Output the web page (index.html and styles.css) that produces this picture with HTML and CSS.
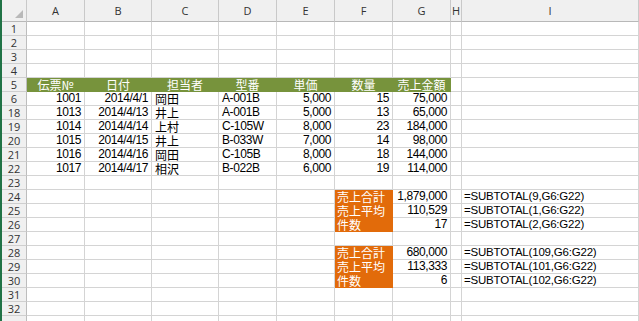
FILE: index.html
```html
<!DOCTYPE html>
<html lang="ja">
<head>
<meta charset="utf-8">
<link rel="stylesheet" href="styles.css">
</head>
<body>
<div class="sheet">
  <div class="row hdr">
    <div class="c corner"><span class="tri"></span></div>
    <div class="c ch">A</div><div class="c ch">B</div><div class="c ch">C</div><div class="c ch">D</div><div class="c ch">E</div><div class="c ch">F</div><div class="c ch">G</div><div class="c ch">H</div><div class="c ch">I</div>
  </div>
  <div class="row"><div class="c rh">1</div><div class="c"></div><div class="c"></div><div class="c"></div><div class="c"></div><div class="c"></div><div class="c"></div><div class="c"></div><div class="c"></div><div class="c"></div></div>
  <div class="row"><div class="c rh">2</div><div class="c"></div><div class="c"></div><div class="c"></div><div class="c"></div><div class="c"></div><div class="c"></div><div class="c"></div><div class="c"></div><div class="c"></div></div>
  <div class="row"><div class="c rh">3</div><div class="c"></div><div class="c"></div><div class="c"></div><div class="c"></div><div class="c"></div><div class="c"></div><div class="c"></div><div class="c"></div><div class="c"></div></div>
  <div class="row"><div class="c rh">4</div><div class="c"></div><div class="c"></div><div class="c"></div><div class="c"></div><div class="c"></div><div class="c"></div><div class="c"></div><div class="c"></div><div class="c"></div></div>
  <div class="row"><div class="c rh">5</div><div class="c g">伝票№</div><div class="c g">日付</div><div class="c g">担当者</div><div class="c g">型番</div><div class="c g">単価</div><div class="c g">数量</div><div class="c g">売上金額</div><div class="c"></div><div class="c"></div></div>
  <div class="row"><div class="c rh">6</div><div class="c r">1001</div><div class="c r">2014/4/1</div><div class="c l jp">岡田</div><div class="c l">A-001B</div><div class="c r">5,000</div><div class="c r">15</div><div class="c r">75,000</div><div class="c"></div><div class="c"></div></div>
  <div class="row"><div class="c rh">18</div><div class="c r">1013</div><div class="c r">2014/4/13</div><div class="c l jp">井上</div><div class="c l">A-001B</div><div class="c r">5,000</div><div class="c r">13</div><div class="c r">65,000</div><div class="c"></div><div class="c"></div></div>
  <div class="row"><div class="c rh">19</div><div class="c r">1014</div><div class="c r">2014/4/14</div><div class="c l jp">上村</div><div class="c l">C-105W</div><div class="c r">8,000</div><div class="c r">23</div><div class="c r">184,000</div><div class="c"></div><div class="c"></div></div>
  <div class="row"><div class="c rh">20</div><div class="c r">1015</div><div class="c r">2014/4/15</div><div class="c l jp">井上</div><div class="c l">B-033W</div><div class="c r">7,000</div><div class="c r">14</div><div class="c r">98,000</div><div class="c"></div><div class="c"></div></div>
  <div class="row"><div class="c rh">21</div><div class="c r">1016</div><div class="c r">2014/4/16</div><div class="c l jp">岡田</div><div class="c l">C-105B</div><div class="c r">8,000</div><div class="c r">18</div><div class="c r">144,000</div><div class="c"></div><div class="c"></div></div>
  <div class="row"><div class="c rh">22</div><div class="c r">1017</div><div class="c r">2014/4/17</div><div class="c l jp">相沢</div><div class="c l">B-022B</div><div class="c r">6,000</div><div class="c r">19</div><div class="c r">114,000</div><div class="c"></div><div class="c"></div></div>
  <div class="row"><div class="c rh">23</div><div class="c"></div><div class="c"></div><div class="c"></div><div class="c"></div><div class="c"></div><div class="c"></div><div class="c"></div><div class="c"></div><div class="c"></div></div>
  <div class="row"><div class="c rh">24</div><div class="c"></div><div class="c"></div><div class="c"></div><div class="c"></div><div class="c"></div><div class="c o">売上合計</div><div class="c r">1,879,000</div><div class="c"></div><div class="c f">=SUBTOTAL(9,G6:G22)</div></div>
  <div class="row"><div class="c rh">25</div><div class="c"></div><div class="c"></div><div class="c"></div><div class="c"></div><div class="c"></div><div class="c o">売上平均</div><div class="c r">110,529</div><div class="c"></div><div class="c f">=SUBTOTAL(1,G6:G22)</div></div>
  <div class="row"><div class="c rh">26</div><div class="c"></div><div class="c"></div><div class="c"></div><div class="c"></div><div class="c"></div><div class="c o">件数</div><div class="c r">17</div><div class="c"></div><div class="c f">=SUBTOTAL(2,G6:G22)</div></div>
  <div class="row"><div class="c rh">27</div><div class="c"></div><div class="c"></div><div class="c"></div><div class="c"></div><div class="c"></div><div class="c"></div><div class="c"></div><div class="c"></div><div class="c"></div></div>
  <div class="row"><div class="c rh">28</div><div class="c"></div><div class="c"></div><div class="c"></div><div class="c"></div><div class="c"></div><div class="c o">売上合計</div><div class="c r">680,000</div><div class="c"></div><div class="c f">=SUBTOTAL(109,G6:G22)</div></div>
  <div class="row"><div class="c rh">29</div><div class="c"></div><div class="c"></div><div class="c"></div><div class="c"></div><div class="c"></div><div class="c o">売上平均</div><div class="c r">113,333</div><div class="c"></div><div class="c f">=SUBTOTAL(101,G6:G22)</div></div>
  <div class="row"><div class="c rh">30</div><div class="c"></div><div class="c"></div><div class="c"></div><div class="c"></div><div class="c"></div><div class="c o">件数</div><div class="c r">6</div><div class="c"></div><div class="c f">=SUBTOTAL(102,G6:G22)</div></div>
  <div class="row"><div class="c rh">31</div><div class="c"></div><div class="c"></div><div class="c"></div><div class="c"></div><div class="c"></div><div class="c"></div><div class="c"></div><div class="c"></div><div class="c"></div></div>
  <div class="row"><div class="c rh">32</div><div class="c"></div><div class="c"></div><div class="c"></div><div class="c"></div><div class="c"></div><div class="c"></div><div class="c"></div><div class="c"></div><div class="c"></div></div>
  <div class="row"><div class="c rh"></div><div class="c"></div><div class="c"></div><div class="c"></div><div class="c"></div><div class="c"></div><div class="c"></div><div class="c"></div><div class="c"></div><div class="c"></div></div>
</div>
</body>
</html>
```
FILE: styles.css
```css
html, body {
  margin: 0;
  padding: 0;
  background: #ffffff;
  overflow: hidden;
  height: 321px;
}
.sheet {
  border-left: 2px solid #217346;
  height: 321px;
  overflow: hidden;
  font-family: "Liberation Sans", "Noto Sans CJK JP", sans-serif;
  font-size: 12px;
  color: #000;
}
.row {
  display: grid;
  grid-template-columns: 25px 58px 67px 67px 58px 58px 58px 58px 11px 1fr;
  height: 14px;
}
.row.hdr {
  height: 22px;
}
.c {
  box-sizing: border-box;
  border-right: 1px solid #d4d4d4;
  border-bottom: 1px solid #d4d4d4;
  line-height: 13px;
  white-space: nowrap;
  overflow: hidden;
  letter-spacing: -0.4px;
}
.hdr .c {
  background: #f0f0f0;
  border-right-color: #c9c9c9;
  border-bottom-color: #b8b8b8;
  line-height: 22px;
  letter-spacing: 0;
}
.corner {
  display: flex;
  align-items: flex-end;
  justify-content: flex-end;
  padding: 0 3px 3px 0;
}
.tri {
  width: 0;
  height: 0;
  border-left: 8px solid transparent;
  border-bottom: 8px solid #b9b9b9;
}
.ch {
  text-align: center;
  font-family: "Open Sans", "DejaVu Sans", sans-serif;
  font-size: 11px;
  color: #333;
}
.rh {
  background: #f0f0f0;
  border-right-color: #bdbdbd;
  border-bottom-color: #cfcfcf;
  text-align: center;
  font-family: "Open Sans", "DejaVu Sans", sans-serif;
  font-size: 11px;
  color: #333;
  line-height: 14px;
  letter-spacing: 0;
}
.r {
  text-align: right;
  padding-right: 3px;
}
.l {
  padding-left: 3px;
}
.jp {
  font-family: "Noto Sans CJK JP", sans-serif;
  letter-spacing: 0;
  overflow: visible;
}
.g {
  background: #77933c;
  border-right-color: #77933c;
  border-bottom-color: #77933c;
  color: #fff;
  text-align: center;
  font-family: "Noto Sans CJK JP", sans-serif;
  letter-spacing: 0;
  overflow: visible;
}
.o {
  background: #e26b0a;
  border-right-color: #e26b0a;
  border-bottom-color: #e26b0a;
  color: #fff;
  padding-left: 2px;
  font-family: "Noto Sans CJK JP", sans-serif;
  letter-spacing: 0;
  overflow: visible;
}
.f {
  padding-left: 2px;
  font-size: 11.5px;
  letter-spacing: -0.2px;
}
```
